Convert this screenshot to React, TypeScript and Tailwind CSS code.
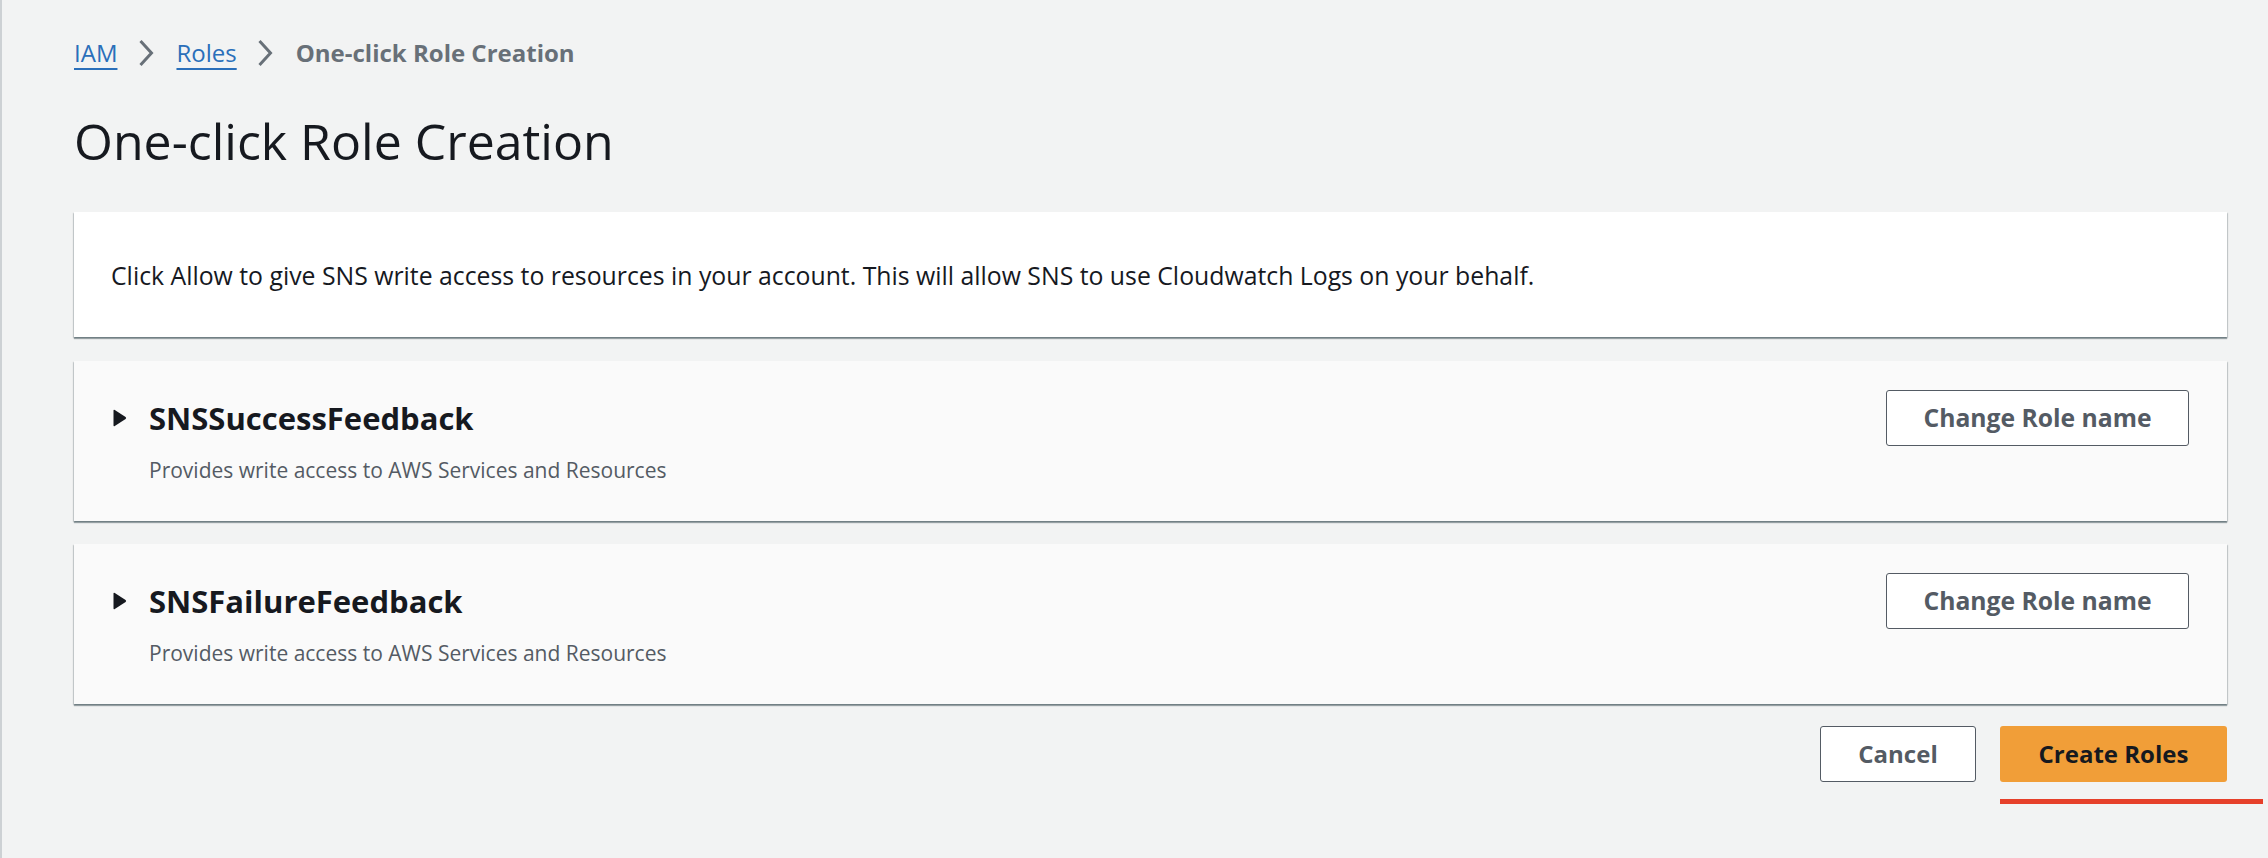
import React from "react";

function Chevron() {
  return (
    <svg width="16" height="28" viewBox="0 0 16 28" className="shrink-0" aria-hidden="true">
      <polyline points="2.5,2 13.5,14 2.5,26" fill="none" stroke="#687078" strokeWidth="3" strokeLinejoin="miter" />
    </svg>
  );
}

function Caret() {
  return (
    <svg width="15" height="18" viewBox="0 0 15 18" className="shrink-0" aria-hidden="true">
      <path d="M1.5 1.8 Q1.5 0.4 2.8 1.1 L13.6 8 Q14.6 9 13.6 10 L2.8 16.9 Q1.5 17.6 1.5 16.2 Z" fill="#16191f" />
    </svg>
  );
}

function RoleCard({ name, className }: { name: string; className?: string }) {
  return (
    <div
      className={
        "flex h-[160px] bg-[#fafafa] shadow-[0_2px_1px_0_rgba(0,28,36,0.35),1px_1px_1px_0_rgba(0,28,36,0.15),-1px_1px_1px_0_rgba(0,28,36,0.15)] " +
        (className ?? "")
      }
    >
      <div className="flex flex-1 flex-col pl-[38px] pt-[37px]">
        <div className="flex h-[40px] items-center">
          <Caret />
          <span className="ml-[22px] text-[31px] leading-[40px] font-bold text-[#16191f]">{name}</span>
        </div>
        <div className="mt-[17px] pl-[37px] text-[21px] leading-[30px] text-[#545b64]">
          Provides write access to AWS Services and Resources
        </div>
      </div>
      <div className="pr-[38px] pt-[29px]">
        <button className="flex h-[56px] w-[303px] items-center justify-center rounded-[3px] border border-[#545b64] bg-white text-[24.7px] font-bold text-[#545b64]">
          Change Role name
        </button>
      </div>
    </div>
  );
}

export default function App() {
  return (
    <div
      className="h-[858px] w-full border-l-2 border-[#cdd1d4] bg-[#f2f3f3] pl-[72px] pr-[41px] pt-[35px] text-[#16191f]"
      style={{ fontFamily: '"Open Sans", "Noto Sans", sans-serif' }}
    >
      <nav className="flex h-[36px] items-center text-[24px] leading-[36px]">
        <a className="text-[#2a6fba] underline decoration-[2px] underline-offset-[6px]">IAM</a>
        <span className="ml-[21px] mr-[22px] flex items-center"><Chevron /></span>
        <a className="text-[#2a6fba] underline decoration-[2px] underline-offset-[6px]">Roles</a>
        <span className="ml-[20px] mr-[23px] flex items-center"><Chevron /></span>
        <span className="font-bold text-[#687078]">One-click Role Creation</span>
      </nav>
      <h1 className="mt-[40px] h-[60px] text-[50px] leading-[60px] font-normal text-[#16191f]">
        One-click Role Creation
      </h1>
      <div className="mt-[41px] flex h-[125px] items-center bg-white pl-[37px] shadow-[0_2px_1px_0_rgba(0,28,36,0.35),1px_1px_1px_0_rgba(0,28,36,0.15),-1px_1px_1px_0_rgba(0,28,36,0.15)]">
        <p className="text-[24.8px] leading-[34px] text-[#16191f]">
          Click Allow to give SNS write access to resources in your account. This will allow SNS to use Cloudwatch Logs on your behalf.
        </p>
      </div>
      <RoleCard name="SNSSuccessFeedback" className="mt-[24px]" />
      <RoleCard name="SNSFailureFeedback" className="mt-[23px]" />
      <div className="mt-[22px] flex justify-end gap-[24px]">
        <button className="flex h-[56px] w-[156px] items-center justify-center rounded-[3px] border border-[#545b64] bg-white text-[24px] font-bold text-[#545b64]">
          Cancel
        </button>
        <div className="relative">
          <button className="flex h-[56px] w-[227px] items-center justify-center rounded-[3px] bg-[#f19e38] text-[24px] font-bold text-[#16191f]">
            Create Roles
          </button>
          <div className="absolute left-0 top-[73px] h-[5px] w-[263px] bg-[#e6402a]" />
        </div>
      </div>
    </div>
  );
}
